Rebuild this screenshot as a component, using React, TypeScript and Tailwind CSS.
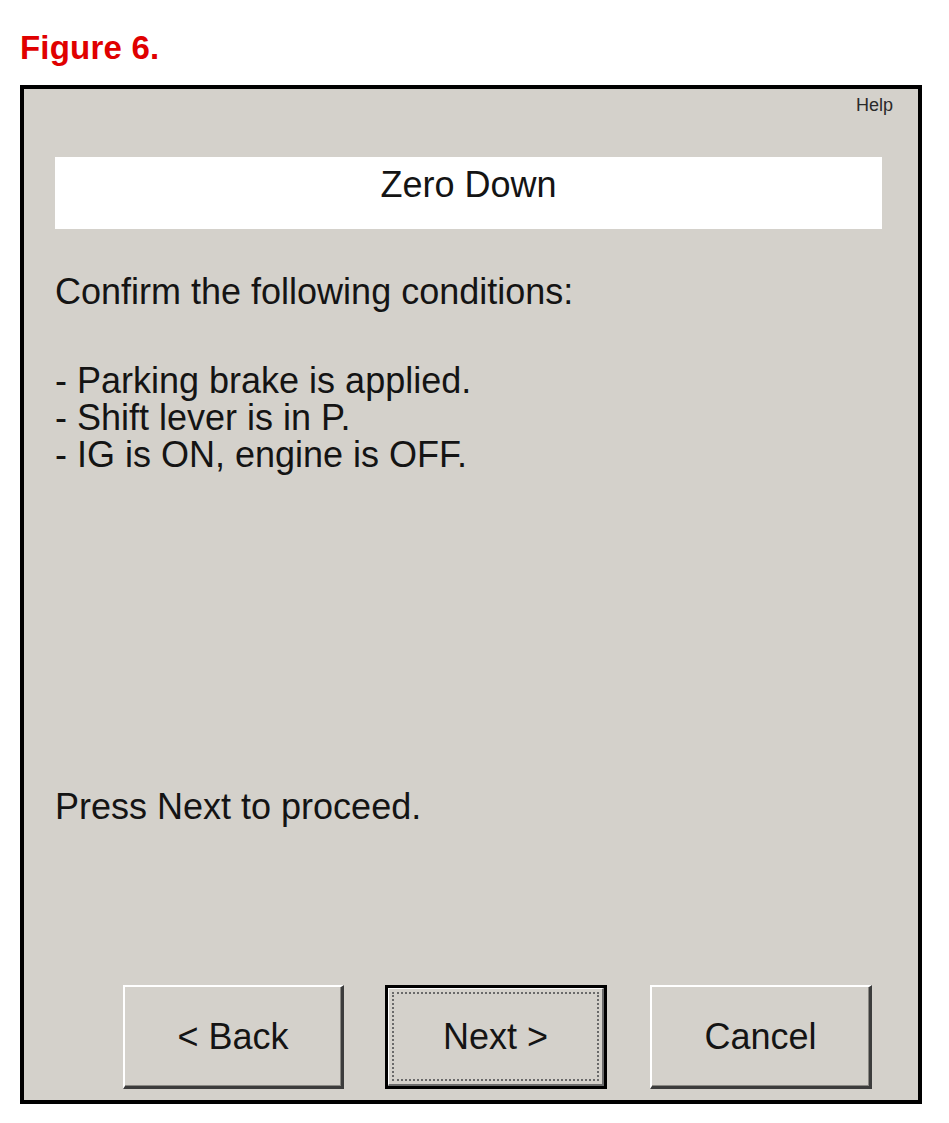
const font = { fontFamily: '"Liberation Sans", Arial, Helvetica, sans-serif' };

const ClassicButton = ({ label, width, isDefault = false }: { label: string; width: string; isDefault?: boolean }) => {
  if (isDefault) {
    return (
      <div className={`${width} h-[104px] border-[3px] border-black bg-[#d4d1cb]`}>
        <div className="h-full w-full border-t border-l border-white border-b-2 border-r-2 border-b-[#6b6b6b] border-r-[#6b6b6b] p-[3px]">
          <div className="h-full w-full border-2 border-dotted border-[#6a6a6a] flex items-center justify-center">
            <span className="text-[36px] leading-[36px] text-[#141414]">{label}</span>
          </div>
        </div>
      </div>
    );
  }

  return (
    <div
      className={`${width} h-[104px] bg-[#d4d1cb] border-t-2 border-l-2 border-white border-b-[3px] border-r-[3px] border-b-[#3c3c3c] border-r-[#3c3c3c] shadow-[inset_-1px_-1px_0_#8a8883] flex items-center justify-center`}
    >
      <span className="text-[36px] leading-[36px] text-[#141414]">{label}</span>
    </div>
  );
};

export default function App() {
  return (
    <div className="w-[949px] h-[1123px] bg-white" style={font}>
      {/* caption */}
      <div className="pl-[20px] pt-[31px]">
        <span className="text-[33px] leading-[33px] font-bold text-[#e00000] tracking-[0.2px]">Figure 6.</span>
      </div>

      {/* dialog frame */}
      <div className="ml-[20px] mt-[19px] w-[902px] h-[1019px] border-4 border-black bg-[#d4d1cb] flex flex-col">
        <div className="flex justify-end pr-[25px] pt-[6px]">
          <span className="text-[18px] leading-[20px] text-[#2a2a2a]">Help</span>
        </div>

        <div className="ml-[31px] mr-[36px] mt-[42px] h-[72px] bg-white flex justify-center pt-[10px]">
          <span className="text-[36px] leading-[36px] text-[#141414]">Zero Down</span>
        </div>

        <div className="pl-[31px] text-[36px] leading-[37px] text-[#141414]">
          <div className="mt-[44px]">Confirm the following conditions:</div>
          <div className="mt-[52px]">
            <div>- Parking brake is applied.</div>
            <div>- Shift lever is in P.</div>
            <div>- IG is ON, engine is OFF.</div>
          </div>
          <div className="mt-[315px]">Press Next to proceed.</div>
        </div>

        <div className="mt-auto mb-[11px] pl-[99px] flex">
          <ClassicButton label="< Back" width="w-[221px]" />
          <div className="ml-[41px]">
            <ClassicButton label="Next >" width="w-[222px]" isDefault />
          </div>
          <div className="ml-[43px]">
            <ClassicButton label="Cancel" width="w-[222px]" />
          </div>
        </div>
      </div>
    </div>
  );
}
